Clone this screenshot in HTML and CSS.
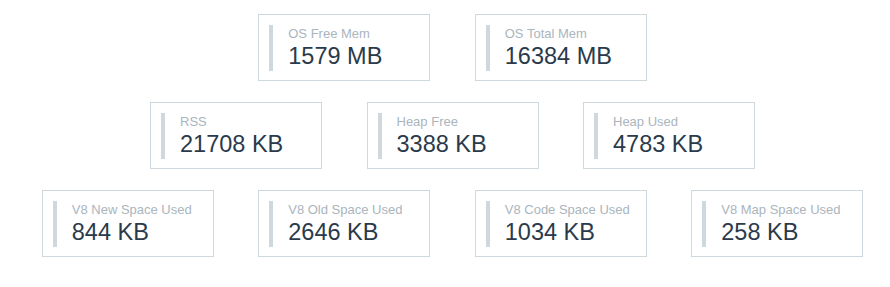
FILE: index.html
```html
<!DOCTYPE html>
<html lang="en">
<head>
    <meta charset="UTF-8">
    <meta name="viewport" content="width=device-width, initial-scale=1.0">
    <title>Process Stats</title>
    <link rel="stylesheet" href="styles.css">
</head>
<body>
    <div class="stats">
        <div class="stats-row">
            <div class="stat"><div class="stat-bar"><div class="stat-label">OS Free Mem</div><div class="stat-value">1579 MB</div></div></div>
            <div class="stat"><div class="stat-bar"><div class="stat-label">OS Total Mem</div><div class="stat-value">16384 MB</div></div></div>
        </div>
        <div class="stats-row">
            <div class="stat"><div class="stat-bar"><div class="stat-label">RSS</div><div class="stat-value">21708 KB</div></div></div>
            <div class="stat"><div class="stat-bar"><div class="stat-label">Heap Free</div><div class="stat-value">3388 KB</div></div></div>
            <div class="stat"><div class="stat-bar"><div class="stat-label">Heap Used</div><div class="stat-value">4783 KB</div></div></div>
        </div>
        <div class="stats-row">
            <div class="stat"><div class="stat-bar"><div class="stat-label">V8 New Space Used</div><div class="stat-value">844 KB</div></div></div>
            <div class="stat"><div class="stat-bar"><div class="stat-label">V8 Old Space Used</div><div class="stat-value">2646 KB</div></div></div>
            <div class="stat"><div class="stat-bar"><div class="stat-label">V8 Code Space Used</div><div class="stat-value">1034 KB</div></div></div>
            <div class="stat"><div class="stat-bar"><div class="stat-label">V8 Map Space Used</div><div class="stat-value">258 KB</div></div></div>
        </div>
    </div>
</body>
</html>
```

FILE: styles.css
```css
body { margin: 8px; background: #fff; font-family: "Liberation Sans", Arial, sans-serif; }
.stats { display: flex; flex-direction: column; gap: 21px; padding: 6px 0 0 15px; }
.stats-row { display: flex; justify-content: center; gap: 44.5px; }
.stat {
    box-sizing: border-box;
    width: 172px;
    padding: 10px 10px 9px;
    border: 1px solid #cfd8dc;
    background: #fff;
}
.stat-bar { border-left: 4px solid #cfd8dc; padding: 2px 0 2px 15px; }
.stat-label { font-size: 13px; line-height: 14px; color: #aab5bd; white-space: nowrap; }
.stat-value { margin-top: 2px; font-size: 23.5px; line-height: 26px; color: #2a3a4b; white-space: nowrap; }
```
